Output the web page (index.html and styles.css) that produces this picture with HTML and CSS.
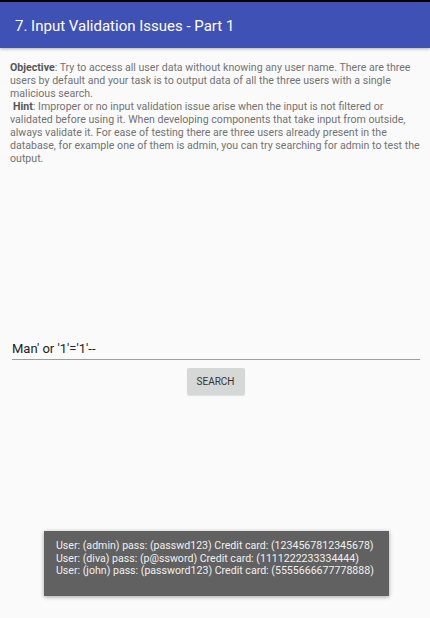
FILE: index.html
```html
<!DOCTYPE html>
<html>
<head>
<meta charset="utf-8">
<link rel="stylesheet" href="styles.css">
</head>
<body>
<div class="status"></div>
<header class="appbar"><h1 class="title">7. Input Validation Issues - Part 1</h1></header>
<main class="content">
  <p class="desc"><b>Objective</b>: Try to access all user data without knowing any user name. There are three users by default and your task is to output data of all the three users with a single malicious search.</p>
  <p class="desc hint"><b>Hint</b>: Improper or no input validation issue arise when the input is not filtered or validated before using it. When developing components that take input from outside, always validate it. For ease of testing there are three users already present in the database, for example one of them is admin, you can try searching for admin to test the output.</p>
  <div class="field"><span class="field-text">Man' or '1'='1'--</span></div>
  <div class="actions"><button class="btn">SEARCH</button></div>
</main>
<div class="toast">
  <div>User: (admin) pass: (passwd123) Credit card: (1234567812345678)</div>
  <div>User: (diva) pass: (p@ssword) Credit card: (1111222233334444)</div>
  <div>User: (john) pass: (password123) Credit card: (5555666677778888)</div>
</div>
</body>
</html>
```
FILE: styles.css
```css
html, body {
  margin: 0;
  padding: 0;
  height: 100%;
}
body {
  background: #fafafa;
  font-family: Roboto, "Noto Sans", sans-serif;
  position: relative;
  overflow: hidden;
}
.status {
  height: 2px;
  background: #000;
}
.appbar {
  height: 45px;
  background: #3f51b5;
  display: flex;
  align-items: center;
  padding-left: 15px;
  padding-top: 1px;
  box-shadow: 0 1px 3px rgba(0,0,0,0.3);
  position: relative;
}
.title {
  margin: 0;
  font-size: 15px;
  font-weight: 400;
  color: #fff;
}
.content {
  padding: 13px 10px 0 10px;
}
.desc {
  margin: 0;
  font-size: 10.6px;
  line-height: 13px;
  color: #737373;
}
.desc b {
  color: #555;
  font-weight: 700;
}
.hint {
  text-indent: 3px;
}
.hint + .field {
  margin-top: 171px;
}
.field {
  margin-left: 2px;
  border-bottom: 1px solid #9e9e9e;
  height: 24px;
  display: flex;
  align-items: flex-end;
  padding-bottom: 3px;
  box-sizing: border-box;
}
.field-text {
  font-size: 13px;
  color: #222;
}
.actions {
  display: flex;
  justify-content: center;
  padding-top: 8px;
}
.btn {
  background: #d6d7d7;
  border: none;
  border-radius: 2px;
  width: 58px;
  height: 27px;
  font-family: Roboto, sans-serif;
  font-size: 10px;
  color: #333;
  padding: 0;
  margin-left: 1px;
  box-shadow: 0 1px 1px rgba(0,0,0,0.1);
}
.toast {
  position: absolute;
  left: 44px;
  top: 531px;
  width: 345px;
  height: 65px;
  box-sizing: border-box;
  background: #616161;
  color: #f0f0f0;
  font-size: 10.6px;
  line-height: 12.5px;
  padding: 9px 0 0 12px;
  box-shadow: 0 1px 4px rgba(0,0,0,0.35);
}
```
